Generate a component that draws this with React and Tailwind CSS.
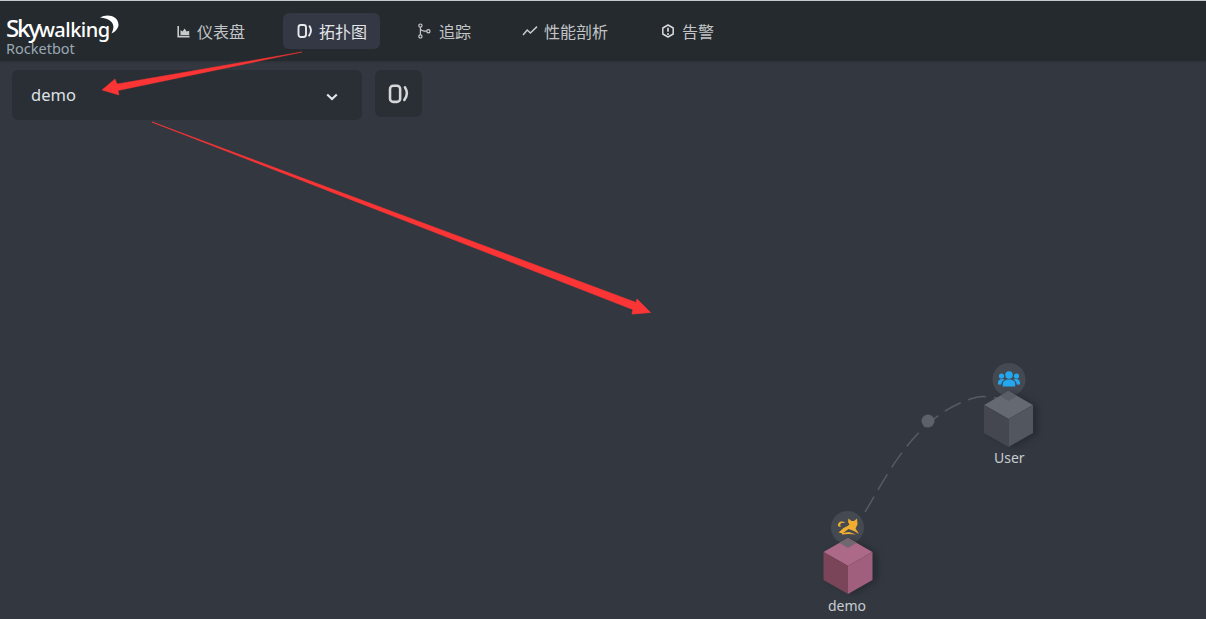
import React from "react";

function NavItem({ icon, label, active, className }) {
  return (
    <div className={`flex items-center gap-[6px] h-9 rounded-md text-[16px] ${active ? "bg-[#333844] text-[#e4e6e8]" : "text-[#c2c5c8]"} ${className}`}>
      {icon}
      <span className="pt-px">{label}</span>
    </div>
  );
}

const IconChart = () => (
  <svg width="13" height="13" viewBox="0 0 13 13" fill="none" className="mr-[1px] text-[#c8cacc]">
    <path d="M1.2 1v10.600H12.500" stroke="currentColor" strokeWidth="1.600" />
    <path d="M3.500 10V5l2 1.600L7.600 3.600l2 3 2.600-.8V10z" fill="currentColor" />
  </svg>
);
const IconTopo = ({ size = 1 }) => (
  <svg width={16 * size} height={16 * size} viewBox="0 0 16 16" fill="none">
    <rect x="1.500" y="2" width="7.500" height="12" rx="2.400" stroke="currentColor" strokeWidth="1.900" />
    <path d="M12.600 3.200c1.900 3 1.600 6.600-.5 9.400" stroke="currentColor" strokeWidth="1.900" strokeLinecap="round" />
  </svg>
);
const IconTrace = () => (
  <svg width="13" height="16" viewBox="0 0 13 16" fill="none" className="mr-[2px] text-[#c8cacc]">
    <circle cx="2.400" cy="2.600" r="1.600" stroke="currentColor" strokeWidth="1.200" />
    <circle cx="2.400" cy="13.400" r="1.600" stroke="currentColor" strokeWidth="1.200" />
    <circle cx="10.400" cy="8.200" r="1.600" stroke="currentColor" strokeWidth="1.200" />
    <path d="M2.400 4.200v7.600M2.600 6.200c1 1.600 3 2 6.200 2" stroke="currentColor" strokeWidth="1.200" />
  </svg>
);
const IconLine = () => (
  <svg width="16" height="12" viewBox="0 0 16 12" fill="none" className="text-[#c8cacc]">
    <path d="M1 10l4.200-5 3.200 3L15 1.600" stroke="currentColor" strokeWidth="1.500" />
  </svg>
);
const IconAlert = () => (
  <svg width="14" height="14" viewBox="0 0 14 14" fill="none" className="mr-[1px] text-[#d8dadc]">
    <path d="M7 1l5.200 3v6L7 13l-5.200-3V4z" stroke="currentColor" strokeWidth="1.500" strokeLinejoin="round" />
    <path d="M7 3.800v4" stroke="currentColor" strokeWidth="1.700" />
    <circle cx="7" cy="9.900" r="1" fill="currentColor" />
  </svg>
);

function Cube({ top, left, right, x, y }) {
  return (
    <g transform={`translate(${x} ${y})`}>
      <path d="M0 0L24.500 14V42L0 56L-24.500 42V14Z" fill="#1d2126" opacity="0.55" transform="translate(5 1)" style={{ filter: "blur(3px)" }} />
      <path d="M0 0L24.500 14L0 28L-24.500 14Z" fill={top} />
      <path d="M-24.500 14L0 28V56L-24.500 42Z" fill={left} />
      <path d="M24.500 14L0 28V56L24.500 42Z" fill={right} />
    </g>
  );
}

export default function App() {
  return (
    <div className="relative h-[619px] w-[1206px] overflow-hidden bg-[#333840] font-['Noto_Sans','Noto_Sans_CJK_SC',sans-serif]">
      <div className="h-px bg-[#c9cacb]" />
      <header className="flex h-[60px] items-center bg-[#252a2e] shadow-[0_1px_2px_rgba(0,0,0,0.15)]">
        <div className="relative ml-[6px] flex h-full w-[154px] flex-col pt-[15px] leading-none">
          <div className="flex h-[24px] items-baseline text-white">
            <span className="text-[24px] leading-[24px] font-medium tracking-[-2.200px]">Sky</span>
            <span className="text-[20px] leading-[24px] font-medium tracking-[-0.500px]">walking</span>
          </div>
          <span className="mt-[2px] text-[14.500px] leading-[13px] text-[#9aa8b4]">Rocketbot</span>
          <svg width="19" height="20" viewBox="0 0 19 20" className="absolute left-[94px] top-[13px]">
            <path d="M0 3.500C7 -.8 18 1.500 18.500 10.500C18.700 14 15.500 18 11.500 19.500C13.500 15.500 14.500 11.500 11.500 8C8.500 5 4.500 3.800 0 3.500Z" fill="#fff" />
          </svg>
        </div>
        <div className="ml-[17px] flex items-center">
          <NavItem icon={<IconChart />} label="仪表盘" className="w-[106px]" />
          <NavItem icon={<span className="text-[#e8eaec]"><IconTopo /></span>} label="拓扑图" active className="w-[97px] pl-[14px]" />
          <NavItem icon={<IconTrace />} label="追踪" className="ml-[38px] w-[104px]" />
          <NavItem icon={<IconLine />} label="性能剖析" className="w-[139px]" />
          <NavItem icon={<IconAlert />} label="告警" />
        </div>
      </header>
      <div className="flex gap-[13px] pl-[12px] pt-[9px]">
        <div className="flex h-[50px] w-[350px] items-center justify-between rounded-md bg-[#2a2f36] pl-[19px] pr-[24px] text-[16.500px] text-[#dfe2e4]">
          <span>demo</span>
          <svg width="12" height="8" viewBox="0 0 12 8" fill="none" className="mt-[3px] text-[#e4e6e8]">
            <path d="M1.200 1.400L6 6l4.800-4.600" stroke="currentColor" strokeWidth="2.100" />
          </svg>
        </div>
        <div className="flex h-[47px] w-[47px] items-center justify-center rounded-md bg-[#2a2f36] text-[#d4d6d8]">
          <IconTopo size={1.350} />
        </div>
      </div>

      {/* Topology canvas */}
      <svg className="absolute left-0 top-0" width="1206" height="619" viewBox="0 0 1206 619" fill="none">
        <path d="M865 512C885 480 915 412 978 397C985 396 992 397 1002 399" stroke="#565b64" strokeWidth="1.500" strokeDasharray="18 8" />
        <circle cx="928" cy="421" r="6.500" fill="#5c616a" />

        <circle cx="1009" cy="379.500" r="16.500" fill="#454a52" />
        <Cube x={1008.500} y={391} top="#656972" left="#44474f" right="#52565e" />
        <path d="M1008.500 391l8.500 5-8.500 5-8.500-5z" fill="#5a5e66" />

        <g fill="#22a7f0">
          <circle cx="1009" cy="375" r="3.800" />
          <path d="M1002.800 386.500v-2.500c0-3 2.500-4.500 6.200-4.500s6.200 1.500 6.200 4.500v2.500z" />
          <circle cx="1001.500" cy="376" r="2.600" />
          <circle cx="1016.500" cy="376" r="2.600" />
          <path d="M1001.300 384.500h-3.300v-1.800c0-2.300 1.800-3.700 4.300-3.700 1 0 1.800.2 2.500.6-1.800 1-3.500 2.400-3.500 4.900z" />
          <path d="M1016.700 384.500h3.300v-1.800c0-2.300-1.800-3.700-4.300-3.700-1 0-1.800.2-2.500.6 1.800 1 3.500 2.400 3.500 4.900z" />
        </g>

        <circle cx="847.500" cy="527.500" r="16.500" fill="#454a52" />
        <Cube x={848} y={538} top="#ad6a88" left="#7a4558" right="#a05f7c" />
        <path d="M848 538l8.500 5-8.500 5-8.500-5z" fill="#71676f" />
        <g fill="#f0ad2e">
          <path d="M848.500 518.500l3 2.500h2.500l3-2.500.5 6-2 4 3.500 5.500-5-3-5.500-2-6 4.500-4-1 5-4.500 4-2 2-1.500-1.500-2.500z" />
          <path d="M838 526c-.5-2.800 1.500-4.700 4.500-4.500 1.500.1 2.500.7 3 1.500-1.800-.5-3.500-.5-4.500.3-.9.800-.9 2-.2 3.200-.5.300-1.500.600-2.800-.5z" />
          <path d="M842 533l7-1 7 2.500-7-.5-7 .5z" />
        </g>

        {/* Hand-drawn annotation arrows */}
        <path d="M302 52L117 84L115 79L102 90L119 95L118 90.500Z" fill="#fb3535" stroke="#fb3535" strokeWidth="0.500" />
        <path d="M152 122L636 302.500L637 299L650.500 312.500L632 314L633 309.500Z" fill="#fb3535" stroke="#fb3535" strokeWidth="0.700" />
      </svg>

      <span className="absolute left-[994px] top-[448px] text-[14px] leading-[19px] text-[#c9ccd0]">User</span>
      <span className="absolute left-[828px] top-[596px] text-[14px] leading-[19px] text-[#c9ccd0]">demo</span>
    </div>
  );
}
